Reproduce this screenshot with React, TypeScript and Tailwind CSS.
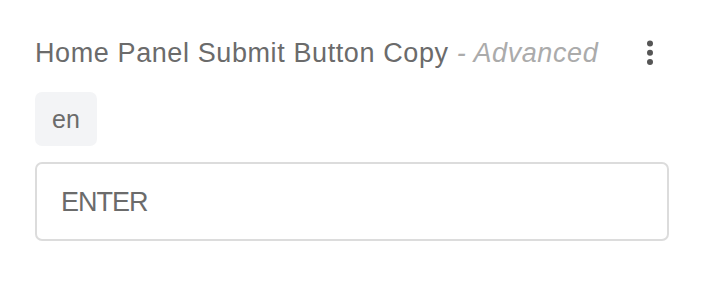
export default function App() {
  return (
    <div className="min-h-screen bg-white px-[35px] pt-[37px] font-['Liberation_Sans',Arial,sans-serif]">
      <div className="flex items-center justify-between">
        <h2 className="text-[27px] leading-[32px] tracking-[0.6px] text-[#6b6b6b]">
          Home Panel Submit Button Copy{" "}
          <span className="italic text-[#ababab]">- Advanced</span>
        </h2>
        <button className="mr-[7px] flex h-8 w-6 items-center justify-center text-[#555]">
          <svg width="6" height="26" viewBox="0 0 6 26" fill="currentColor">
            <circle cx="3" cy="3.5" r="3" />
            <circle cx="3" cy="12.8" r="3" />
            <circle cx="3" cy="22.1" r="3" />
          </svg>
        </button>
      </div>
      <div className="mt-[23px] flex">
        <span className="rounded-[7px] bg-[#f3f4f6] px-[17px] py-[11px] text-[25px] leading-[32px] text-[#6b6b6b]">
          en
        </span>
      </div>
      <div className="mt-[16px] flex h-[79px] items-center rounded-[7px] border-2 border-[#dcdcdc] pl-[24px] pt-[2px]">
        <span className="text-[27px] tracking-[-1px] text-[#6b6b6b]">ENTER</span>
      </div>
    </div>
  );
}
